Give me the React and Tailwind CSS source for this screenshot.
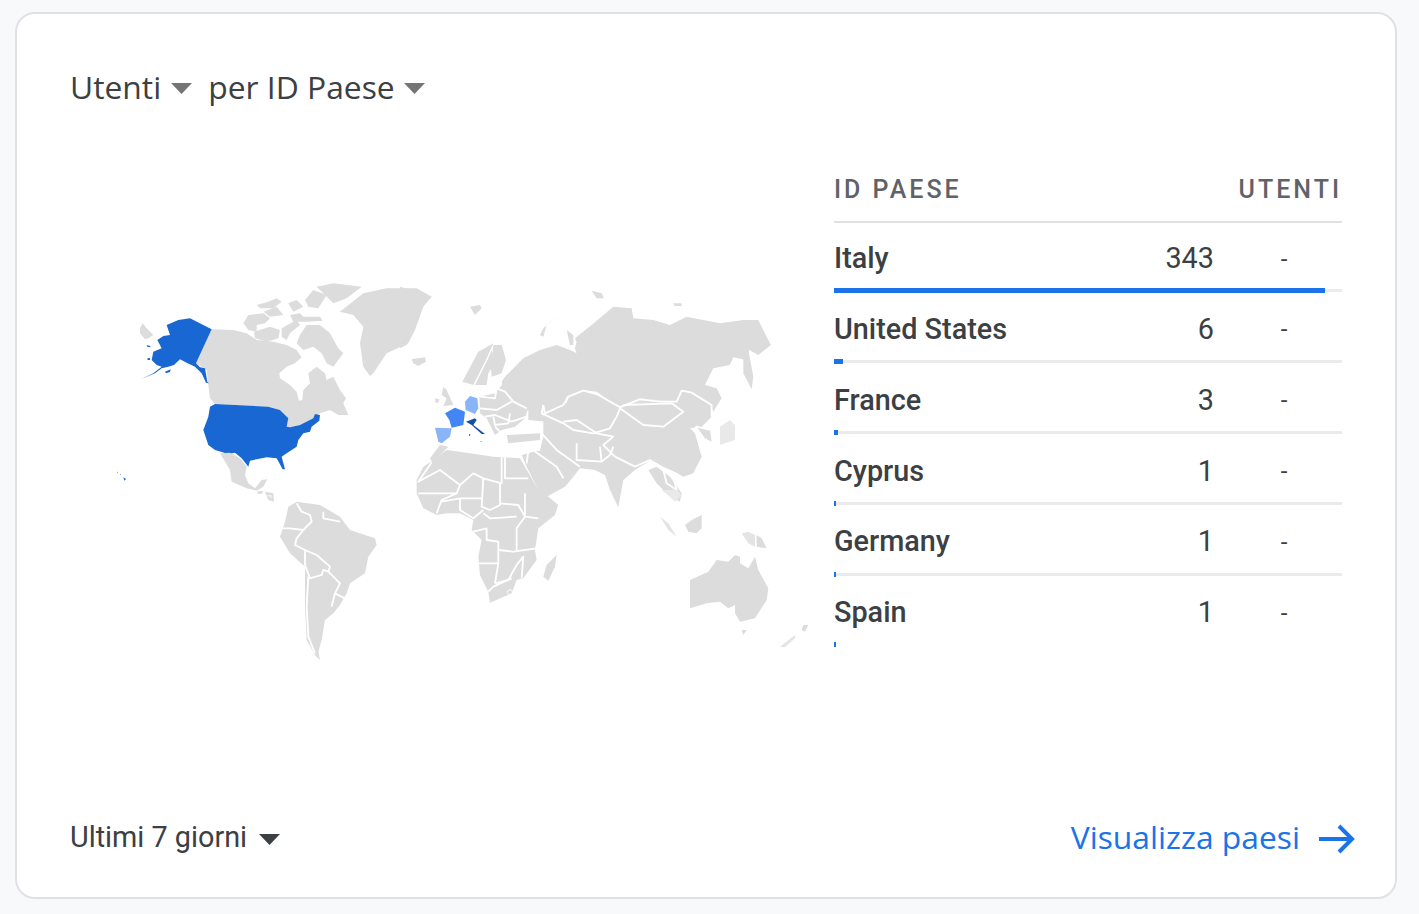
import React from 'react';

const rows = [
  { name: 'Italy', value: '343', bar: 491, track: true },
  { name: 'United States', value: '6', bar: 9, track: true },
  { name: 'France', value: '3', bar: 4, track: true },
  { name: 'Cyprus', value: '1', bar: 2, track: true },
  { name: 'Germany', value: '1', bar: 2, track: true },
  { name: 'Spain', value: '1', bar: 2, track: false },
];

const LAND = '#dcdcdc';
const FAINT = '#f1f1f1';

// each group below uses the coordinates of one reference crop (3x)
function Crop({ x, y, children }) {
  return <g transform={`translate(${x} ${y}) scale(0.3333)`}>{children}</g>;
}

const Land = ({ p, fill = LAND }) => <polygon points={p} fill={fill} stroke="none" />;
const Line = ({ p, w = 5.5 }) => (
  <polyline points={p} fill="none" stroke="#fff" strokeWidth={w} strokeLinejoin="round" />
);

function WorldMap() {
  return (
    <svg viewBox="70 270 764 400" className="w-[764px] h-[400px] shrink-0 mt-[165px]">
      {/* North America */}
      <Crop x={100} y={270}>
        <Land p="120,175 128,160 140,175 160,195 145,205 135,208 120,190" />
        <Land p="335,178 400,180 440,190 470,210 520,215 560,225 590,240 605,262 585,280 560,290 538,310 540,325 570,345 590,365 597,392 607,390 610,360 630,340 625,310 650,290 675,310 680,330 700,320 720,360 738,385 730,400 745,435 715,435 690,420 660,430 640,445 600,465 570,472 560,470 565,445 540,420 505,410 345,402 330,385 325,345 320,300 288,280" />
        <Land p="430,160 445,135 490,130 510,145 495,160 470,165 470,185 445,180" />
        <Land p="470,105 505,95 530,85 545,95 520,115 480,115" />
        <Land p="490,125 530,110 550,135 510,140" />
        <Land p="462,185 510,170 540,180 535,205 500,215 465,205" />
        <Land p="545,175 590,150 600,165 570,190 560,210 545,200" />
        <Land p="600,195 620,165 660,165 690,190 715,235 730,250 700,290 680,280 665,250 640,230 610,240 590,220" />
        <Land p="570,135 600,130 610,140 660,140 668,152 620,155 580,155" />
        <Land p="565,100 590,90 610,110 580,125" />
        <Land p="615,90 640,60 680,75 655,115 625,110" />
        <Land p="650,50 700,40 785,50 740,85 700,100 670,70" />
        <Land p="720,125 790,70 860,55 950,55 995,80 970,110 945,180 925,220 860,250 820,310 810,318 790,290 780,220 790,170 760,135" />
        <Land p="935,268 975,262 978,275 955,288 940,280" />
        <Land p="200,165 235,150 270,145 335,178 288,280 300,292 315,295 322,335 327,340 318,338 305,310 285,290 260,278 240,268 222,285 205,290 185,295 165,310 125,327 160,310 185,290 170,285 155,270 160,245 185,235 172,210 190,198 210,195" fill="#1967d2" />
        <Land p="140,225 150,228 152,232 142,230" fill="#1967d2" />
        <Land p="142,265 150,264 150,270 143,270" fill="#1967d2" />
        <Land p="195,305 212,298 210,306 198,310" fill="#1967d2" />
        <Land p="345,402 505,410 540,420 565,445 560,470 570,472 600,465 640,445 645,432 660,435 658,452 635,470 630,485 610,490 595,510 590,530 560,550 545,560 555,598 548,598 530,565 500,562 470,568 450,572 445,590 425,565 405,548 385,552 345,540 325,525 310,480 325,440 330,410" fill="#1967d2" />
        <Land p="51,605 54,606 53,609" fill="#1967d2" />
        <Land p="60,612 63,613 62,616" fill="#1967d2" />
        <Land p="70,622 78,627 73,632" fill="#1967d2" />
      </Crop>

      {/* Mexico and the Caribbean */}
      <Crop x={210} y={440}>
        <Land p="30,40 60,38 90,55 110,80 105,105 115,130 135,145 155,120 172,118 160,140 140,152 110,145 65,125 60,90" />
        <Land p="140,155 160,152 155,162 145,162" />
        <Land p="165,155 190,160 192,185 175,180" />
        <Land p="170,165 185,165 185,175" fill={FAINT} />
      </Crop>

      {/* South America, Africa */}
      <Crop x={260} y={450}>
        <Land p="85,170 110,155 180,165 240,200 270,240 345,265 350,285 325,320 315,370 270,400 260,430 240,465 220,490 195,510 185,570 175,605 180,630 165,615 140,570 135,470 135,350 90,310 60,260 75,215" />
        <Line p="110,160 125,185 150,195 155,215 130,240 110,265 105,285 135,300 135,345" />
        <Line p="60,235 90,235 130,240" />
        <Line p="190,185 190,205 240,215" />
        <Line p="135,300 170,315 210,350 205,365 240,400 225,430 215,470" />
        <Line p="135,345 150,385 185,375 190,360 205,365" />
        <Line p="145,380 140,470 145,560 165,610" />
        <Line p="225,430 255,445" />

        <Land p="470,90 490,50 520,30 560,0 630,10 700,20 780,25 830,110 895,165 885,195 835,235 825,300 830,330 790,385 770,390 755,430 690,458 685,425 660,375 655,320 665,270 635,240 640,210 600,190 560,190 530,195 490,175 470,130" />
        <Line p="520,30 475,95 540,60 600,105 640,70 670,85 725,100 725,20" />
        <Line p="735,20 735,85 805,85" />
        <Line p="600,105 590,130 500,130 475,130" />
        <Line p="670,85 665,170 690,180 720,165 720,100" />
        <Line p="590,130 545,150 530,190" />
        <Line p="545,155 600,145 665,145" />
        <Line p="600,145 600,180 640,205 670,180" />
        <Line p="720,160 775,165 795,200 835,205" />
        <Line p="795,130 795,200 770,235 770,300" />
        <Line p="670,190 690,205 770,200" />
        <Line p="640,245 680,235 680,270 715,275 715,340" />
        <Line p="655,340 715,340 705,400" />
        <Line p="715,300 760,305 830,295" />
        <Line p="705,400 745,390 770,345 790,320 785,385" />
        <Line p="685,425 700,410 755,385" />
        <Line p="740,427 750,418 760,427 750,436 740,427" w={3} />
        <Land p="890,315 885,350 865,392 850,380 860,345" />
      </Crop>

      {/* Eurasia */}
      <Crop x={400} y={270}>
        <Land p="0,50 55,65 95,80 60,110 40,170 20,225 0,235" />
        <Land p="35,268 75,263 75,275 50,286" />
        <Land p="210,110 240,105 245,115 225,135" />
        <Land p="575,62 605,70 612,85 590,85" />
        <Land p="430,175 478,133 440,165 430,200 420,195" />
        <Land p="500,180 520,195 520,225 510,225" />
        <Land p="530,215 545,250 530,252 525,235" />
        <Land p="820,100 845,100 845,108 825,108" />
        <Land p="315,320 370,265 420,240 470,225 510,240 530,250 540,240 525,205 575,165 640,110 695,115 700,145 760,150 810,165 860,140 960,160 1030,150 1075,150 1105,210 1113,225 1075,255 1048,240 1040,270 1000,262 990,285 940,295 915,345 950,355 965,385 940,425 930,405 875,365 845,360 830,395 770,390 720,385 670,405 655,410 590,365 550,360 500,380 495,405 430,405 425,430 440,455 385,450 385,420 340,395 310,365 305,335" />
        <Land p="1030,265 1045,240 1060,320 1055,358 1030,310" />
        <Land p="430,405 500,400 505,375 550,360 590,370 660,410 720,385 830,395 845,360 875,365 935,405 935,440 905,470 870,475 885,490 905,560 880,610 850,620 830,608 790,590 755,570 720,590 705,600 670,630 655,712 630,660 615,615 585,600 540,595 520,620 495,650 440,680 420,670 380,590 365,555 420,540 430,500" />
        <Land p="890,470 930,480 935,515 915,505" />
        <Land p="960,470 990,450 1005,465 1005,510 975,520 960,525" fill="#e9e9e9" />
        <Land p="770,590 810,620 845,670 840,695 810,680 770,640 745,600" />
        <Line p="430,405 425,430 490,460 520,480 580,490 630,475 650,440 660,415" />
        <Line p="430,405 435,430 490,405 505,380 550,362 590,372 660,412 720,388 780,395 830,395 845,362 875,368 935,405 935,440" />
        <Line p="660,415 730,465 790,470 850,425 815,400 670,405" />
        <Line p="490,455 530,450 590,490 640,500 610,525 645,560 705,590 750,570 770,590" />
        <Line p="425,490 470,540 540,590" />
        <Line p="530,520 530,570 605,575 600,530" />
        <Line p="605,575 630,555 640,530" />
        <Line p="385,530 470,590 490,625" />
        <Line p="420,540 385,540 380,580" />
        <Line p="790,600 800,640 830,660 820,620" />
        <Line p="880,480 890,470 930,480" />
      </Crop>

      {/* Europe */}
      <Crop x={430} y={330}>
        <Land p="97,155 145,65 190,40 170,85 130,165" />
        <Land p="135,165 175,85 185,60 193,100 175,130 170,165" />
        <Land p="190,45 215,45 228,90 215,130 185,140 183,115" />
        <Land p="40,170 50,180 70,225 40,228 50,205 35,195" />
        <Land p="15,205 28,208 25,218 17,218" />
        <Land p="148,200 195,190 220,160 260,215 295,235 285,265 255,290 215,300 195,315 170,265 150,250" />
        <Land p="230,315 330,310 330,330 235,340" />
        <Land p="0,385 30,345 55,350 25,380 10,405" />
        <Line p="150,200 195,205 200,175 225,185 250,215 290,235" />
        <Line p="150,235 200,240 245,215" />
        <Line p="165,260 195,255 245,275 290,260" />
        <Line p="190,260 195,285 235,280 240,250" />
        <Line p="195,290 215,310" />
        <Land p="105,215 120,198 142,205 145,235 135,252 107,240" fill="#8ab4f8" />
        <Land p="45,250 75,233 105,245 100,285 65,293 58,270" fill="#4285f4" />
        <Land p="15,293 65,295 60,320 35,340 25,335" fill="#8ab4f8" />
        <Land p="108,275 135,265 140,270 130,285 165,312 155,312 125,285" fill="#174ea6" />
        <Land p="117,312 121,312 120,318 117,318" fill="#4285f4" />
        <Land p="150,333 155,333 154,337" fill="#4285f4" />
      </Crop>

      {/* Oceania */}
      <Crop x={640} y={490}>
        <Land p="60,80 85,100 110,140 85,120" fill="#e4e4e4" />
        <Land p="135,105 155,90 185,75 185,115 170,130 145,125" />
        <Land p="65,0 110,0 125,15 105,35 90,20" fill="#e9e9e9" />
        <Land p="305,130 325,125 345,135 345,170 325,160" fill="#e4e4e4" />
        <Land p="350,135 365,145 380,175 350,170" />
        <Land p="150,270 205,245 230,210 265,215 285,195 300,200 300,220 325,235 345,200 355,240 385,295 380,330 345,385 300,395 285,370 285,345 265,355 240,335 200,340 150,355" />
        <Land p="305,420 320,420 310,435" />
        <Land p="490,405 505,405 495,425 485,420" />
        <Land p="420,470 465,435 465,445 435,472" fill="#e4e4e4" />
      </Crop>
    </svg>
  );
}

function Caret({ color = '#757575' }) {
  return (
    <svg width="21" height="11" viewBox="0 0 21 11" className="shrink-0">
      <polygon points="0,0 21,0 10.5,11" fill={color} />
    </svg>
  );
}

export default function App() {
  return (
    <div className="w-[1419px] h-[914px] bg-[#f8f9fa] pt-3 pl-[15px] font-['Roboto',sans-serif] text-[#3c4043]">
      <div className="w-[1382px] h-[887px] bg-white border-2 border-[#e0e1e5] rounded-[20px] pl-[53px] pr-[53px] flex flex-col">
        {/* Title */}
        <div className="flex items-center mt-[55px] h-9 text-[31.8px] font-['Open_Sans',sans-serif]">
          <span>Utenti</span>
          <span className="ml-[10px] mt-[2px]"><Caret /></span>
          <span className="ml-[16px]">per ID Paese</span>
          <span className="ml-[9px] mt-[2px]"><Caret /></span>
        </div>

        <div className="flex">
          <WorldMap />

          {/* Table */}
          <div className="w-[508px] mt-[65px]">
            <div className="flex justify-between h-[53px] pt-[5px] border-b-2 border-[#e0e1e5] text-[25px] leading-[30px] font-medium tracking-[0.12em] text-[#5f6368]">
              <span>ID PAESE</span>
              <span>UTENTI</span>
            </div>
            {rows.map((r) => (
              <div key={r.name} className="h-[70.9px] flex flex-col">
                <div className="h-[68px] pt-[3px] flex items-center text-[28.8px]">
                  <span className="font-medium flex-1">{r.name}</span>
                  <span className="w-[100px] text-right">{r.value}</span>
                  <span className="ml-[35px] w-[70px] text-center text-[24px]">-</span>
                  <span className="w-[23px]" />
                </div>
                <div className={r.track ? 'relative -mt-[2px] h-[3px] bg-[#ebebed]' : 'relative -mt-[2px] h-[3px]'}>
                  <div className="absolute left-0 -bottom-[1px] h-[5px] bg-[#1a73e8]" style={{ width: r.bar }} />
                </div>
              </div>
            ))}
          </div>
        </div>

        {/* Footer */}
        <div className="mt-auto mb-[36px] flex items-center justify-between -mr-[13px]">
          <div className="flex items-center text-[28.8px]">
            <span>Ultimi 7 giorni</span>
            <span className="ml-[12px] mt-1"><Caret color="#3c4043" /></span>
          </div>
          <div className="flex items-center text-[#1a73e8] text-[31.8px] font-['Open_Sans',sans-serif]">
            <span>Visualizza paesi</span>
            <svg width="36" height="30" viewBox="0 0 36 30" fill="none" stroke="#1a73e8" strokeWidth="4" className="ml-[19px] mt-1">
              <path d="M0 15H33M20 2L33 15L20 28" />
            </svg>
          </div>
        </div>
      </div>
    </div>
  );
}
